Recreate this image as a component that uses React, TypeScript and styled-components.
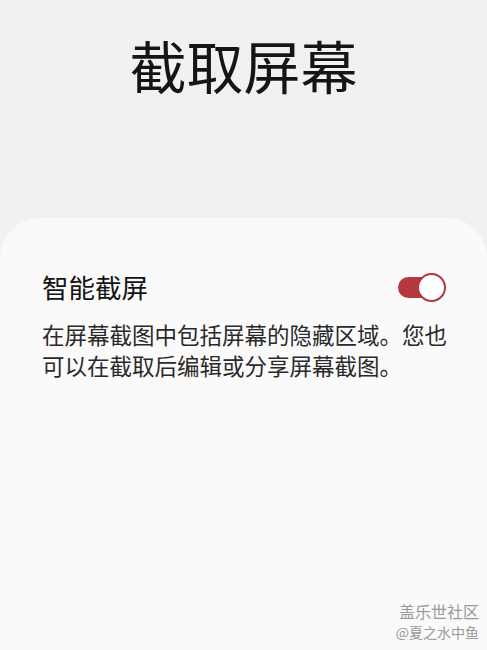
import styled, { createGlobalStyle } from 'styled-components'

const GlobalStyle = createGlobalStyle`
  html, body {
    margin: 0;
    padding: 0;
    background: #f1f1f1;
  }

  body {
    font-family: "Noto Sans CJK SC", "Noto Sans", sans-serif;
  }
`

const Screen = styled.div`
  display: flex;
  flex-direction: column;
  width: 487px;
  height: 650px;
  overflow: hidden;
  background: #f1f1f1;
  position: relative;
`

const Header = styled.header`
  height: 218px;
  display: flex;
  justify-content: center;
  padding-top: 26px;
  box-sizing: border-box;

  h1 {
    margin: 0;
    font-size: 57px;
    font-weight: 400;
    line-height: 76px;
    color: #151515;
  }
`

const Card = styled.section`
  flex: 1;
  background: #fafafa;
  border-radius: 40px 40px 0 0;
  padding: 49px 41px 0 42px;
`

const SettingRow = styled.div`
  display: flex;
  align-items: center;
  justify-content: space-between;
  height: 40px;

  .label {
    font-size: 26.5px;
    color: #141414;
    line-height: 40px;
  }
`

const Toggle = styled.div<{ $on: boolean }>`
  position: relative;
  width: 49px;
  height: 29px;

  .track {
    position: absolute;
    left: 1px;
    top: 4px;
    width: 46px;
    height: 21px;
    border-radius: 11px;
    background: ${p => (p.$on ? '#b5383d' : '#c9c9c9')};
  }

  .knob {
    position: absolute;
    top: 0;
    left: ${p => (p.$on ? '20px' : '0')};
    width: 25px;
    height: 25px;
    border-radius: 50%;
    background: #fff;
    border: 2px solid ${p => (p.$on ? '#b5383d' : '#c9c9c9')};
  }
`

const Description = styled.p`
  margin: 12px -12px 0 0;
  font-size: 22.5px;
  line-height: 31px;
  color: #2a2a2a;
`

const Watermark = styled.div`
  position: absolute;
  right: 8px;
  bottom: 8px;
  display: flex;
  flex-direction: column;
  align-items: flex-end;
  color: #9a9a9a;

  .site {
    font-size: 16px;
    line-height: 22px;
  }

  .author {
    font-size: 14px;
    line-height: 20px;
  }
`

export default function App() {
  return (
    <>
      <GlobalStyle />
      <Screen>
        <Header>
          <h1>截取屏幕</h1>
        </Header>
        <Card>
          <SettingRow>
            <span className="label">智能截屏</span>
            <Toggle $on>
              <div className="track" />
              <div className="knob" />
            </Toggle>
          </SettingRow>
          <Description>
            在屏幕截图中包括屏幕的隐藏区域。您也可以在截取后编辑或分享屏幕截图。
          </Description>
        </Card>
        <Watermark>
          <span className="site">盖乐世社区</span>
          <span className="author">@夏之水中鱼</span>
        </Watermark>
      </Screen>
    </>
  )
}
